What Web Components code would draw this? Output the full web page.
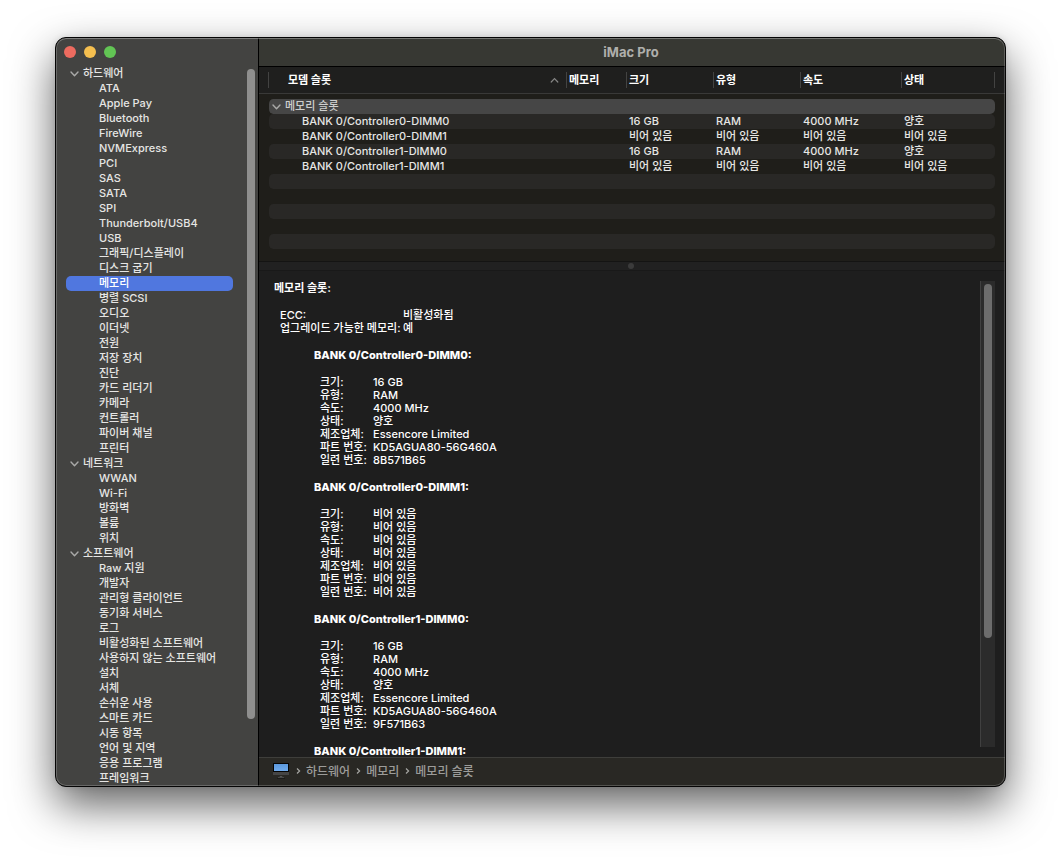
<!DOCTYPE html>
<html lang="ko">
<head>
<meta charset="utf-8">
<title>iMac Pro</title>
<style>
  body {
    margin: 0;
    background: #fff;
    font: 500 11px/15px Inter, "Noto Sans CJK KR", sans-serif;
    color: #e6e6e4;
  }
</style>
</head>
<body>
<mac-window>
  <window-sidebar slot="sidebar"></window-sidebar>
  <span slot="title">iMac Pro</span>
  <memory-table></memory-table>
  <split-handle></split-handle>
  <memory-report></memory-report>
  <path-bar></path-bar>
</mac-window>

<script>
class BaseElement extends HTMLElement {
  connectedCallback() {
    if (this.shadowRoot) return;
    this.attachShadow({ mode: 'open' }).innerHTML =
      '<style>*{box-sizing:border-box}' + this.css() + '</style>' + this.html();
  }
  css() { return ''; }
  html() { return ''; }
}

const chevron = '<svg class="chev" width="9" height="6" viewBox="0 0 9 6" aria-hidden="true"><path d="M1 1l3.5 3.8L8 1" fill="none" stroke="#a9a9a8" stroke-width="1.4" stroke-linecap="round" stroke-linejoin="round"/></svg>';

customElements.define('mac-window', class extends BaseElement {
  css() { return `
    :host { display: block; padding: 37px 55px 73px; box-sizing: border-box; height: 100vh; min-height: 480px; overflow: hidden; }
    .frame { position: relative; display: grid; grid-template-columns: 203px minmax(0, 1fr); height: 100%;
      border: 1px solid #050505; border-radius: 11px; overflow: clip; background: #1e1e1e;
      box-shadow: 0 18px 44px rgba(0,0,0,.62), 0 0 6px rgba(0,0,0,.1); }
    .frame::after { content: ""; position: absolute; inset: 0; border: 1px solid rgba(255,255,255,.2);
      border-top-color: rgba(255,255,255,.32); border-radius: 10px; pointer-events: none; }
    main { display: flex; flex-direction: column; min-width: 0; min-height: 0; }
    header { flex: none; height: 29px; display: flex; align-items: center; justify-content: center;
      padding-right: 2px; background: #373833; border-bottom: 1px solid #000; }
    h1 { margin: 0; font-size: 13px; line-height: 16px; font-weight: 700; color: #afafac; }
  `; }
  html() { return `<div class="frame"><slot name="sidebar"></slot>
    <main><header><h1><slot name="title"></slot></h1></header><slot></slot></main></div>`; }
});

customElements.define('traffic-lights', class extends BaseElement {
  css() { return `
    :host { display: flex; gap: 8px; }
    button { width: 12px; height: 12px; padding: 0; border: 0; border-radius: 50%; }
    .close { background: #ed6b5f; } .min { background: #f5bf4f; } .zoom { background: #62c554; }
  `; }
  html() { return `<button class="close" aria-label="닫기"></button><button class="min" aria-label="최소화"></button><button class="zoom" aria-label="확대"></button>`; }
});

const groups = [
  ['하드웨어', ['ATA','Apple Pay','Bluetooth','FireWire','NVMExpress','PCI','SAS','SATA','SPI','Thunderbolt/USB4','USB','그래픽/디스플레이','디스크 굽기','메모리','병렬 SCSI','오디오','이더넷','전원','저장 장치','진단','카드 리더기','카메라','컨트롤러','파이버 채널','프린터']],
  ['네트워크', ['WWAN','Wi-Fi','방화벽','볼륨','위치']],
  ['소프트웨어', ['Raw 지원','개발자','관리형 클라이언트','동기화 서비스','로그','비활성화된 소프트웨어','사용하지 않는 소프트웨어','설치','서체','손쉬운 사용','스마트 카드','시동 항목','언어 및 지역','응용 프로그램','프레임워크']],
];

customElements.define('window-sidebar', class extends BaseElement {
  css() { return `
    :host { display: flex; flex-direction: column; min-height: 0; background: #434341; border-right: 1px solid #000; }
    traffic-lights { flex: none; padding: 8px 8px; }
    .body { flex: 1; min-height: 0; display: flex; }
    nav { flex: 1; min-width: 0; overflow: hidden; padding: 0 14px 0 10px; }
    h2 { display: flex; align-items: center; gap: 4px; margin: 0; padding-left: 4px; height: 15px; font: inherit; }
    ul { list-style: none; margin: 0; padding: 0; }
    a { display: block; height: 15px; padding-left: 33px; border-radius: 5px; color: inherit; text-decoration: none; white-space: nowrap; }
    a[aria-current] { background: #5077df; color: #fff; }
    .track { flex: none; width: 11px; padding: 3px 3px 3px 0; }
    .thumb { height: 91%; border-radius: 4px; background: #8f8f8e; }
  `; }
  html() {
    return '<traffic-lights></traffic-lights><div class="body"><nav>' + groups.map(([name, items]) =>
      `<h2>${chevron}<span>${name}</span></h2><ul>` + items.map(t =>
        `<li><a href="#"${t === '메모리' ? ' aria-current="page"' : ''}>${t}</a></li>`).join('') + '</ul>').join('') +
      '</nav><div class="track"><div class="thumb"></div></div></div>';
  }
});

customElements.define('memory-table', class extends BaseElement {
  css() { return `
    :host { display: block; flex: none; background: #1f1e1a; padding-bottom: 12px; }
    table { width: 100%; table-layout: fixed; border-collapse: separate; border-spacing: 0; }
    .gap { width: 9px; } .end { width: 10px; }
    th, td { padding: 0 0 0 3px; text-align: left; font-weight: 500; white-space: nowrap; height: 15px; line-height: 15px; }
    thead th { height: 27px; background: #1f1f1e; border-bottom: 1px solid #393938; font-weight: 700; color: #fff; padding: 5px 0; }
    thead th span { display: block; height: 16px; line-height: 16px; padding-left: 2px; border-left: 1px solid #434342; }
    thead th:nth-child(2) span { display: flex; align-items: center; justify-content: space-between; padding: 0 7px 0 19px; }
    thead th:nth-child(7) span { border-right: 1px solid #434342; }
    button { padding: 0; border: 0; background: none; font: inherit; color: inherit; }
    .space td { height: 5px; line-height: 5px; }
    .lead { padding-left: 33px; }
    td:nth-child(2) { border-left: 1px solid transparent; }
    .odd td:not(.g) { background: #292826; background-clip: padding-box; }
    .group td:not(.g) { background: #464646; background-clip: padding-box; }
    .odd td:nth-child(2), .group td:nth-child(2) { border-radius: 5px 0 0 5px; }
    .odd td:nth-child(7), .group td:nth-child(7) { border-radius: 0 5px 5px 0; }
    .group div { display: flex; align-items: center; gap: 4px; color: #cfcfce; }
  `; }
  html() {
    const th = t => `<th scope="col"><span>${t}</span></th>`;
    const row = (cls, cells, lead = 'lead') =>
      `<tr class="${cls}"><td class="g"></td><td class="${lead}">${cells[0]}</td>` +
      cells.slice(1).map(c => `<td>${c}</td>`).join('') + '<td class="g"></td></tr>';
    const blank = ['', '', '', '', '', ''];
    return `<table>
      <colgroup><col class="gap"><col><col style="width:60px"><col style="width:87px"><col style="width:87px"><col style="width:101px"><col style="width:94px"><col class="end"></colgroup>
      <thead><tr><th></th><th scope="col"><span><button>모뎀 슬롯</button><svg width="9" height="6" viewBox="0 0 9 6" aria-hidden="true"><path d="M1.2 5l3.3-3.4L7.800 5" fill="none" stroke="#858584" stroke-width="1.2" stroke-linecap="round"/></svg></span></th>
      ${['메모리','크기','유형','속도','상태'].map(th).join('')}<th></th></tr></thead>
      <tbody><tr class="space"><td colspan="8"></td></tr>
      ${row('group', [`<div>${chevron}메모리 슬롯</div>`, '', '', '', '', ''], '')}
      ${row('odd', ['BANK 0/Controller0-DIMM0', '', '16 GB', 'RAM', '4000 MHz', '양호'])}
      ${row('', ['BANK 0/Controller0-DIMM1', '', '비어 있음', '비어 있음', '비어 있음', '비어 있음'])}
      ${row('odd', ['BANK 0/Controller1-DIMM0', '', '16 GB', 'RAM', '4000 MHz', '양호'])}
      ${row('', ['BANK 0/Controller1-DIMM1', '', '비어 있음', '비어 있음', '비어 있음', '비어 있음'])}
      ${row('odd', blank)}${row('', blank)}${row('odd', blank)}${row('', blank)}${row('odd', blank)}
      </tbody></table>`;
  }
});

customElements.define('split-handle', class extends BaseElement {
  css() { return `
    :host { flex: none; display: flex; align-items: center; justify-content: center; box-sizing: border-box; height: 10px;
      padding-right: 2px; background: #212121; border-top: 1px solid #141413; border-bottom: 1px solid #191919; }
    i { width: 6px; height: 6px; border-radius: 50%; background: #3b3b3b; }
  `; }
  html() { return '<i></i>'; }
});

const labels = ['크기:', '유형:', '속도:', '상태:', '제조업체:', '파트 번호:', '일련 번호:'];
const banks = [
  ['BANK 0/Controller0-DIMM0:', ['16 GB','RAM','4000 MHz','양호','Essencore Limited','KD5AGUA80-56G460A','8B571B65']],
  ['BANK 0/Controller0-DIMM1:', Array(7).fill('비어 있음')],
  ['BANK 0/Controller1-DIMM0:', ['16 GB','RAM','4000 MHz','양호','Essencore Limited','KD5AGUA80-56G460A','9F571B63']],
  ['BANK 0/Controller1-DIMM1:', null],
];

customElements.define('memory-report', class extends BaseElement {
  css() { return `
    :host { flex: 1; min-height: 0; display: flex; padding: 0 10px 0 15px; background: #1e1e1e; color: #fff; line-height: 13px; }
    article { flex: 1; min-width: 0; overflow: hidden; padding-top: 11px; }
    h2, h3 { margin: 0 0 14px; font-size: 11px; line-height: 13px; font-weight: 700; }
    h3 { font-weight: 800; }
    table { border-spacing: 0; margin: 0 0 14px 6px; }
    th, td { padding: 0; height: 13px; text-align: left; font-weight: 500; white-space: nowrap; }
    th { width: 123px; }
    section { padding-left: 40px; }
    section th { width: 53px; }
    .track { flex: none; width: 15px; margin: 10px 0; padding: 3px; background: #2b2b2b; border-left: 1px solid #404040; }
    .thumb { height: 77%; width: 8px; border-radius: 4px; background: #6c6c6c; }
  `; }
  html() {
    const tr = (l, v) => `<tr><th scope="row">${l}</th><td>${v}</td></tr>`;
    return `<article><h2>메모리 슬롯:</h2><table>${tr('ECC:', '비활성화됨')}${tr('업그레이드 가능한 메모리:', '예')}</table>` +
      banks.map(([n, v]) => `<section><h3>${n}</h3>` +
        (v ? `<table>${labels.map((l, i) => tr(l, v[i])).join('')}</table>` : '') + '</section>').join('') +
      '</article><div class="track"><div class="thumb"></div></div>';
  }
});

customElements.define('path-bar', class extends BaseElement {
  css() { return `
    :host { flex: none; display: flex; align-items: center; box-sizing: border-box; height: 29px; padding: 0 14px 2px;
      background: #292824; border-top: 1px solid #3e3e3b; font-size: 12px; color: #9c9c99; }
    ol { display: flex; list-style: none; margin: 0; padding: 0 0 0 7px; }
    li { display: flex; align-items: center; gap: 5px; margin-right: 6px; }
    a { color: inherit; text-decoration: none; }
  `; }
  html() {
    const sep = '<svg width="5" height="8" viewBox="0 0 5 8" aria-hidden="true"><path d="M1 1.500l2.600 2.500L1 6.500" fill="none" stroke="#a5a5a2" stroke-width="1.2"/></svg>';
    return `<svg width="16" height="16" viewBox="0 0 16 16" aria-hidden="true">
      <defs><linearGradient id="s" x1="0" y1="0" x2="0" y2="1"><stop offset="0" stop-color="#5b98dc"/><stop offset="1" stop-color="#6fabee"/></linearGradient></defs>
      <path d="M0 0h16v9H0z" fill="#050505"/><path d="M1 1h14v7H1z" fill="url(#s)"/><path d="M0 9h16v3H0z" fill="#454545"/><path d="M6.500 14L7 13h2l.5 1z" fill="#555"/><path d="M5 14h6v1H5z" fill="#4a4a4a"/><path d="M4 15h8v1H4z" fill="#1b1b19"/></svg>
      <ol>${['하드웨어','메모리','메모리 슬롯'].map(t => `<li>${sep}<a href="#">${t}</a></li>`).join('')}</ol>`;
  }
});
</script>
</body>
</html>
